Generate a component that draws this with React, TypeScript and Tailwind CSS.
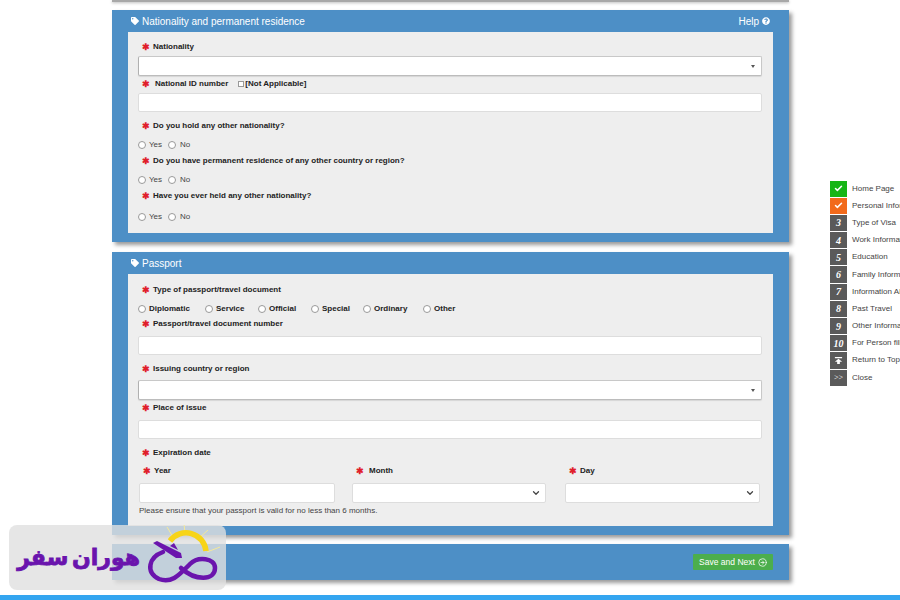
import { Check, ChevronDown, CircleArrowRight } from "lucide-react";
import { FaQuestionCircle, FaTag } from "react-icons/fa";

const sideItems = [
  { mark: "check", label: "Home Page", color: "bg-[#16b516]" },
  { mark: "check", label: "Personal Information", color: "bg-[#f26a1b]" },
  { mark: "3", label: "Type of Visa" },
  { mark: "4", label: "Work Information" },
  { mark: "5", label: "Education" },
  { mark: "6", label: "Family Information" },
  { mark: "7", label: "Information About" },
  { mark: "8", label: "Past Travel" },
  { mark: "9", label: "Other Information" },
  { mark: "10", label: "For Person filling" },
  { mark: "top", label: "Return to Top" },
  { mark: "close", label: "Close" },
];

const passportTypes = [
  { label: "Diplomatic", width: "w-[67px]" },
  { label: "Service", width: "w-[53px]" },
  { label: "Official", width: "w-[53px]" },
  { label: "Special", width: "w-[52px]" },
  { label: "Ordinary", width: "w-[60px]" },
  { label: "Other", width: "w-[50px]" },
];

const Label = ({ text, className = "" }: { text: React.ReactNode; className?: string }) => (
  <div className={`flex h-[12px] items-center pl-[4px] text-[8px] font-bold text-[#222] ${className}`}>
    <span className="mt-[1px] w-[11px] shrink-0 text-[9px] leading-none text-[#e0202a]">✱</span>
    {text}
  </div>
);

const TextBox = ({ className = "" }: { className?: string }) => (
  <input
    type="text"
    className={`block h-[19px] w-full rounded-[2px] border border-[#dddddd] bg-white ${className}`}
  />
);

const SelectBox = ({ className = "" }: { className?: string }) => (
  <div className={`flex h-[20px] items-center justify-end rounded-[2px] border border-[#c8c8c8] border-b-[#bcbcbc] border-l-[#b0b0b0] bg-white pr-[6px] shadow-[0_1px_1px_rgba(0,0,0,0.1)] ${className}`}>
    <span className="h-0 w-0 border-x-[2px] border-t-[3px] border-x-transparent border-t-[#555]" />
  </div>
);

const DateSelect = () => (
  <div className="flex h-[20px] items-center justify-end rounded-[2px] border border-[#dddddd] bg-white pr-[4px]">
    <ChevronDown size={10} strokeWidth={3} className="text-[#444]" />
  </div>
);

const Radio = () => (
  <input type="radio" className="h-[8px] w-[8px] appearance-none rounded-full border border-[#999] bg-white" />
);

const YesNo = ({ className = "" }: { className?: string }) => (
  <div className={`flex h-[12px] items-center text-[8px] text-[#444] ${className}`}>
    <Radio />
    <span className="ml-[3px] w-[19px]">Yes</span>
    <Radio />
    <span className="ml-[4px]">No</span>
  </div>
);

const PanelHeader = ({ title, help }: { title: string; help?: boolean }) => (
  <div className="flex h-[22px] items-center justify-between pl-[19px] pr-[19px] text-[10px] text-white">
    <div className="flex items-center gap-[3px]">
      <FaTag size={8} />
      {title}
    </div>
    {help && (
      <div className="flex items-center gap-[3px]">
        Help <FaQuestionCircle size={8} />
      </div>
    )}
  </div>
);

const LogoMark = () => (
  <svg viewBox="140 525 86 65" className="h-[65px] w-[86px] shrink-0" fill="none">
    <g stroke="#f4e99a" strokeWidth="1">
      <path d="M167 527 L173 537" />
      <path d="M184 524 L185 533" />
      <path d="M208 530 L198 539" />
      <path d="M220 547 L207 552" />
    </g>
    <path d="M170 541 A20 20 0 0 1 206 551" stroke="#f7d417" strokeWidth="5.5" />
    <path
      d="M163 552 C149 557 145 572 159 579 C172 584 180 574 190 564 C198 556 215 558 215 568 C215 581 195 581 181 568"
      stroke="#6a14ad"
      strokeWidth="4.5"
      strokeLinecap="round"
    />
    <path d="M153 543 L157 541 L181 553 L182 558 L176 558 Z" fill="#6a14ad" />
    <path d="M170 546 L174 543 L178 550 Z" fill="#6a14ad" />
  </svg>
);

const StepMark = ({ mark }: { mark: string }) => {
  if (mark === "check") return <Check size={9} strokeWidth={4} />;
  if (mark === "close") return <span className="text-[8px] font-normal not-italic">&gt;&gt;</span>;
  if (mark === "top")
    return (
      <svg viewBox="0 0 10 10" className="h-[9px] w-[9px]" fill="white">
        <path d="M1 1h8v1.5H1zM5 3l4 3.5H6.5V9h-3V6.5H1z" />
      </svg>
    );
  return <>{mark}</>;
};

export default function App() {
  return (
    <div className="relative flex h-[600px] w-[900px] flex-col overflow-hidden bg-white font-['Liberation_Sans',sans-serif]">
      {/* end of previous panel */}
      <div className="ml-[112px] h-[2px] w-[677px] bg-[#a8a8a8] shadow-[0_1px_3px_rgba(0,0,0,0.3)]" />

      <div className="ml-[112px] flex w-[677px] flex-col">
        {/* Nationality */}
        <div className="mt-[8px] bg-[#4d8fc6] pb-[9px] shadow-[3px_3px_4px_rgba(0,0,0,0.4)]">
          <PanelHeader title="Nationality and permanent residence" help />
          <div className="mx-[16px] bg-[#eeeeee] pb-[10px] pl-[10px] pr-[11px]">
            <Label text="Nationality" className="mb-[3px] h-[21px] pt-[9px]" />
            <SelectBox />
            <Label
              className="mb-[3px] mt-[2px]"
              text={
                <>
                  <span className="ml-[2px]">National ID number</span>
                  <input type="checkbox" className="ml-[10px] h-[6px] w-[6px] appearance-none border border-[#999] bg-white" />
                  <span className="ml-[1px]">[Not Applicable]</span>
                </>
              }
            />
            <TextBox />
            <Label text="Do you hold any other nationality?" className="mt-[8px]" />
            <YesNo className="mt-[7px]" />
            <Label text="Do you have permanent residence of any other country or region?" className="mt-[4px]" />
            <YesNo className="mt-[7px]" />
            <Label text="Have you ever held any other nationality?" className="mt-[4px]" />
            <YesNo className="mt-[9px]" />
          </div>
        </div>

        {/* Passport */}
        <div className="mt-[10px] bg-[#4d8fc6] pb-[9px] shadow-[3px_3px_4px_rgba(0,0,0,0.4)]">
          <PanelHeader title="Passport" />
          <div className="mx-[16px] bg-[#eeeeee] pb-[9px] pl-[10px] pr-[11px]">
            <Label text="Type of passport/travel document" className="h-[22px] pt-[10px]" />
            <div className="mt-[7px] flex h-[12px] items-center text-[8px] font-bold text-[#222]">
              {passportTypes.map((type) => (
                <div key={type.label} className={`flex items-center gap-[3px] ${type.width}`}>
                  <Radio />
                  {type.label}
                </div>
              ))}
            </div>
            <Label text="Passport/travel document number" className="mt-[3px]" />
            <TextBox className="mt-[6px]" />
            <Label text="Issuing country or region" className="mt-[8px]" />
            <SelectBox className="mt-[5px]" />
            <Label text="Place of issue" className="mt-[2px]" />
            <TextBox className="mt-[6px]" />
            <Label text="Expiration date" className="mt-[8px]" />
            <div className="mt-[6px] flex pl-[1px]">
              <div className="w-[196px]">
                <Label text="Year" className="pl-[3px]" />
                <TextBox className="mt-[6px] h-[20px]" />
              </div>
              <div className="ml-[17px] w-[194px]">
                <Label text={<span className="ml-[2px]">Month</span>} className="pl-[1px]" />
                <div className="mt-[6px]">
                  <DateSelect />
                </div>
              </div>
              <div className="ml-[19px] w-[195px]">
                <Label text="Day" className="pl-[4px]" />
                <div className="mt-[6px]">
                  <DateSelect />
                </div>
              </div>
            </div>
            <div className="mt-[2px] flex h-[12px] items-center pl-[1px] text-[8px] text-[#444]">
              Please ensure that your passport is valid for no less than 6 months.
            </div>
          </div>
        </div>

        {/* Actions */}
        <div className="mt-[9px] flex h-[36px] items-center justify-end bg-[#4d8fc6] pr-[16px] shadow-[3px_3px_4px_rgba(0,0,0,0.4)]">
          <button className="flex h-[16px] w-[80px] items-center justify-center gap-[3px] rounded-[1px] bg-[#4cae4c] text-[8.5px] text-white">
            Save and Next
            <CircleArrowRight size={9} />
          </button>
        </div>
      </div>

      <div className="mt-auto h-[5px] w-full bg-[#33a5f0]" />

      {/* floating step menu */}
      <div className="absolute left-[830px] top-[180px] w-[70px] overflow-hidden">
        {sideItems.map((item) => (
          <div key={item.label} className="flex h-[17.2px] items-center">
            <span
              className={`flex h-[16.2px] w-[17px] shrink-0 items-center justify-center font-['Liberation_Serif',serif] text-[10px] font-bold italic text-white ${item.color ?? "bg-[#5a5a5a]"}`}
            >
              <StepMark mark={item.mark} />
            </span>
            <span className="ml-[5px] whitespace-nowrap text-[8px] text-[#444]">{item.label}</span>
          </div>
        ))}
      </div>

      {/* logo watermark */}
      <div className="absolute left-[9px] top-[525px] flex h-[65px] w-[217px] items-center rounded-[8px] bg-[rgba(224,224,224,0.8)] pl-[11px]">
        <span dir="rtl" className="w-[120px] shrink-0 whitespace-nowrap text-center font-['DejaVu_Sans',sans-serif] text-[22px] font-bold leading-none text-[#6a14ad] [word-spacing:-4px] [-webkit-text-stroke:0.8px_#6a14ad]">
          هوران سفر
        </span>
        <LogoMark />
      </div>
    </div>
  );
}
